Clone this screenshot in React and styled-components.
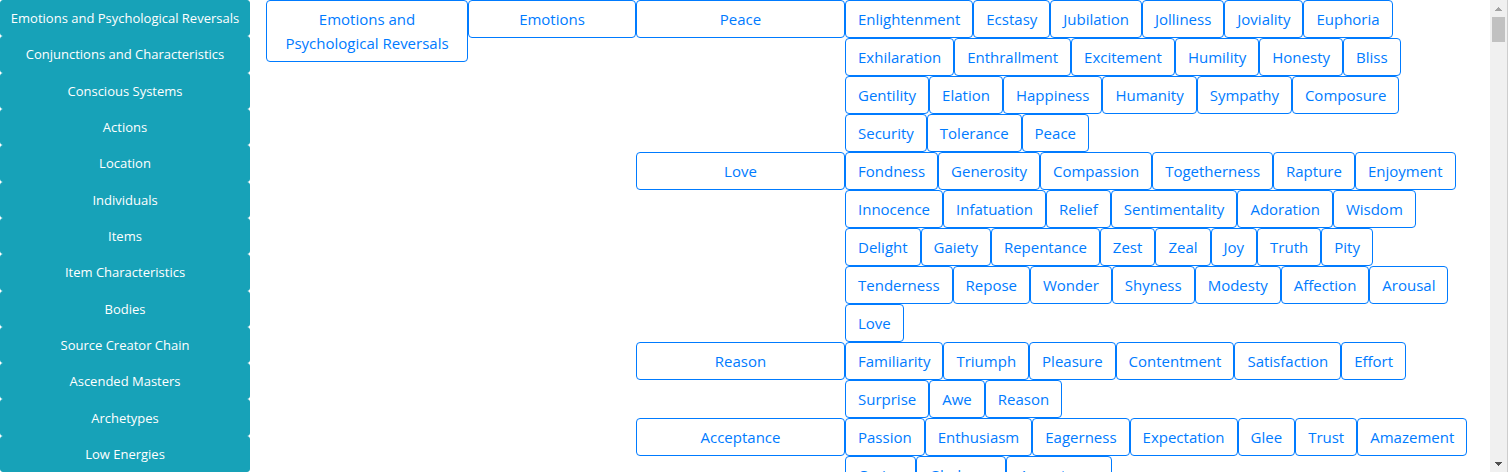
import React from "react";
import styled, { createGlobalStyle } from "styled-components";

const GlobalStyle = createGlobalStyle`
  *, *::before, *::after { box-sizing: border-box; }
  body {
    margin: 0;
    background: #fff;
    font-family: "Segoe UI", "Open Sans", "Noto Sans", sans-serif;
  }
`;

const Page = styled.div`
  display: flex;
  height: 100vh;
  overflow: hidden;
`;

const Sidebar = styled.nav`
  display: flex;
  flex-direction: column;
  flex: none;
  width: 250px;
`;

const CategoryButton = styled.button`
  flex: 1;
  min-height: 32px;
  padding: 4px 0;
  border: 1px solid #17a2b8;
  border-radius: 3px;
  background: #17a2b8;
  color: #fff;
  font-family: inherit;
  font-size: 13px;
  line-height: 20px;
  text-align: center;
  white-space: nowrap;
  cursor: pointer;
`;

const Main = styled.main`
  display: grid;
  grid-template-columns: 202px 168px 1fr;
  align-items: start;
  flex: 1;
  min-width: 0;
  padding: 0 16px;
  overflow: hidden;
`;

const OutlineButton = styled.button`
  padding: 6px 12px;
  border: 1px solid #007bff;
  border-radius: 4px;
  background: transparent;
  color: #007bff;
  font-family: inherit;
  font-size: 15px;
  line-height: 24px;
  text-align: center;
  cursor: pointer;
`;

const Group = styled.section`
  display: grid;
  grid-template-columns: 209px 1fr;
  align-items: start;
`;

const Words = styled.div`
  display: flex;
  flex-wrap: wrap;
`;

const ScrollTrack = styled.div`
  display: flex;
  flex-direction: column;
  align-items: center;
  flex: none;
  width: 18px;
  padding: 7px 0 6px;
  border-right: 1px solid #cdcdcd;
  background: #f0f0f0;
`;

const ScrollThumb = styled.div`
  width: 13px;
  height: 25px;
  margin-top: 6px;
  background: #c1c1c1;
`;

const Arrow = styled.svg`
  display: block;
  width: 7px;
  height: 4px;
  margin-top: ${(p) => (p.$end ? "auto" : "0")};
  fill: ${(p) => (p.$end ? "#505050" : "#a3a3a3")};
`;

const categories = [
  "Emotions and Psychological Reversals",
  "Conjunctions and Characteristics",
  "Conscious Systems",
  "Actions",
  "Location",
  "Individuals",
  "Items",
  "Item Characteristics",
  "Bodies",
  "Source Creator Chain",
  "Ascended Masters",
  "Archetypes",
  "Low Energies",
];

const groups = [
  {
    name: "Peace",
    words: [
      "Enlightenment", "Ecstasy", "Jubilation", "Jolliness", "Joviality", "Euphoria",
      "Exhilaration", "Enthrallment", "Excitement", "Humility", "Honesty", "Bliss",
      "Gentility", "Elation", "Happiness", "Humanity", "Sympathy", "Composure",
      "Security", "Tolerance", "Peace",
    ],
  },
  {
    name: "Love",
    words: [
      "Fondness", "Generosity", "Compassion", "Togetherness", "Rapture", "Enjoyment",
      "Innocence", "Infatuation", "Relief", "Sentimentality", "Adoration", "Wisdom",
      "Delight", "Gaiety", "Repentance", "Zest", "Zeal", "Joy", "Truth", "Pity",
      "Tenderness", "Repose", "Wonder", "Shyness", "Modesty", "Affection", "Arousal",
      "Love",
    ],
  },
  {
    name: "Reason",
    words: [
      "Familiarity", "Triumph", "Pleasure", "Contentment", "Satisfaction", "Effort",
      "Surprise", "Awe", "Reason",
    ],
  },
  {
    name: "Acceptance",
    words: [
      "Passion", "Enthusiasm", "Eagerness", "Expectation", "Glee", "Trust", "Amazement",
      "Caring", "Gladness", "Acceptance",
    ],
  },
];

export default function App() {
  return (
    <>
      <GlobalStyle />
      <Page>
        <Sidebar>
          {categories.map((name) => (
            <CategoryButton key={name} type="button">{name}</CategoryButton>
          ))}
        </Sidebar>
        <Main>
          <OutlineButton type="button">Emotions and Psychological Reversals</OutlineButton>
          <OutlineButton type="button">Emotions</OutlineButton>
          <div>
            {groups.map((group) => (
              <Group key={group.name}>
                <OutlineButton type="button">{group.name}</OutlineButton>
                <Words>
                  {group.words.map((word) => (
                    <OutlineButton key={word} type="button">{word}</OutlineButton>
                  ))}
                </Words>
              </Group>
            ))}
          </div>
        </Main>
        <ScrollTrack aria-hidden="true">
          <Arrow viewBox="0 0 7 4"><path d="M3 0h1v1h1v1h1v1h1v1H0V3h1V2h1V1h1z" /></Arrow>
          <ScrollThumb />
          <Arrow $end viewBox="0 0 7 4"><path d="M0 0h7v1H6v1H5v1H4v1H3V3H2V2H1V1H0z" /></Arrow>
        </ScrollTrack>
      </Page>
    </>
  );
}
